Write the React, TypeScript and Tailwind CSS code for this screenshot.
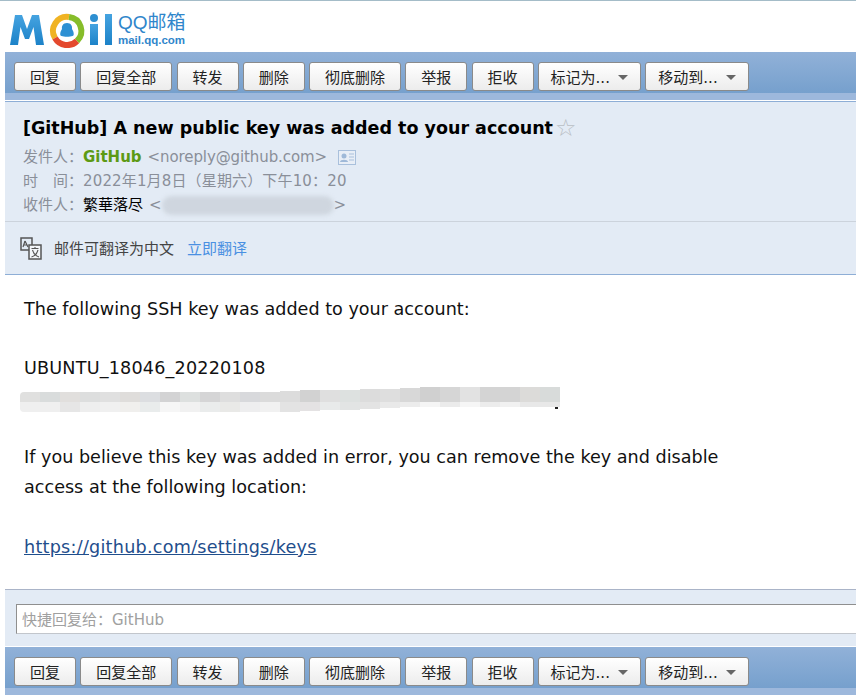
import React from "react";

const FONT = "font-['Tahoma','DejaVu_Sans','Noto_Sans_CJK_SC',sans-serif]";

const actions: Array<{ label: string; width: string; menu?: boolean }> = [
  { label: "回复", width: "w-[62px]" },
  { label: "回复全部", width: "w-[92px]" },
  { label: "转发", width: "w-[62px]" },
  { label: "删除", width: "w-[62px]" },
  { label: "彻底删除", width: "w-[92px]" },
  { label: "举报", width: "w-[62px]" },
  { label: "拒收", width: "w-[62px]" },
  { label: "标记为...", width: "w-[103px]", menu: true },
  { label: "移动到...", width: "w-[104px]", menu: true },
];

// pixelated block over the key: [top box, bottom box]
const redactCells: Array<[string, string]> = [
  ["h-[10px] bg-[#e0e0df] rounded-tl-[4px]", "h-[10px] bg-[#efefef] rounded-bl-[4px]"],
  ["h-[10px] bg-[#d9dcdc]", "h-[10px] bg-[#efefef]"],
  ["h-[10px] bg-[#e1dfdd]", "h-[10px] bg-[#e6e6e6]"],
  ["h-[10px] bg-[#dddede]", "h-[10px] bg-[#eeeeee]"],
  ["h-[10px] bg-[#e0e0e0]", "h-[10px] bg-[#f0f0f0]"],
  ["h-[10px] bg-[#dfdddb]", "h-[10px] bg-[#f0efed]"],
  ["h-[10px] bg-[#dcdee1]", "h-[10px] bg-[#e9ecec]"],
  ["h-[10px] bg-[#d3d3d4]", "h-[10px] bg-[#f6f6f6]"],
  ["h-[10px] bg-[#dde0df]", "h-[10px] bg-[#f1f1f1]"],
  ["h-[10px] bg-[#d5d5d6]", "h-[10px] bg-[#eaecec]"],
  ["h-[10px] bg-[#dedede]", "h-[10px] bg-[#e9e9e7]"],
  ["h-[10px] bg-[#d8d9dc]", "h-[10px] bg-[#eeeeef]"],
  ["h-[10px] bg-[#dbdbdb]", "h-[10px] bg-[#f1f1f1]"],
  ["h-[11px] bg-[#dcdcdc]", "h-[10px] bg-[#e3e3e3]"],
  ["h-[12px] bg-[#d2d2d2]", "h-[9px] bg-[#e4e2e3]"],
  ["h-[12px] bg-[#dfdfdf]", "h-[8px] bg-[#e8eaea]"],
  ["h-[12px] bg-[#dde1e0]", "h-[8px] bg-[#e2e4e4]"],
  ["h-[13px] bg-[#dcdcdc]", "h-[7px] bg-[#e3e3e3]"],
  ["h-[13px] bg-[#dedede]", "h-[6px] bg-[#e9e9e9]"],
  ["h-[14px] bg-[#d8d8d8]", "h-[5px] bg-[#ececec]"],
  ["h-[15px] bg-[#d0d0d0]", "h-[5px] bg-[#f5f5f5]"],
  ["h-[15px] bg-[#d6d6d6]", "h-[5px] bg-[#ebebeb]"],
  ["h-[15px] bg-[#e2e2e2]", "h-[5px] bg-[#f6f6f6]"],
  ["h-[15px] bg-[#d4d4d4]", "h-[5px] bg-[#ececec]"],
  ["h-[15px] bg-[#d4d4d4]", "h-[5px] bg-[#f1f1f1]"],
  ["h-[15px] bg-[#dcdbd9]", "h-[5px] bg-[#e8e8e8]"],
  ["h-[15px] bg-[#d8dbda]", "h-[5px] bg-[#e8e8e8]"],
];

const Toolbar = () => (
  <div className="bg-[#9db8dc]">
    <div className="h-[41px] bg-gradient-to-b from-[#91b1d8] to-[#76a0cd] pl-[9px] pt-[10px]">
      <div className="flex gap-[4.25px]">
        {actions.map((a) => (
          <button
            key={a.label}
            className={`${a.width} h-[29px] shrink-0 rounded-[3px] border border-[#8a8a8a] bg-gradient-to-b from-white to-[#ececec] text-[15px] leading-[28px] pt-[2px] text-[#222] flex items-center justify-center gap-[8px]`}
          >
            <span>{a.label}</span>
            {a.menu && <span className="w-0 h-0 border-x-[5px] border-x-transparent border-t-[5px] border-t-[#666]" />}
          </button>
        ))}
      </div>
    </div>
    <div className="h-[7px]" />
  </div>
);

const Logo = () => (
  <div className="h-[51px] flex items-start pl-[9px] pt-[11px]">
    <svg width="106" height="36" viewBox="0 0 106 36" fill="none">
      <defs>
        <linearGradient id="blue" x1="0" y1="0" x2="0" y2="1">
          <stop offset="0" stopColor="#45a3e0" />
          <stop offset="1" stopColor="#1c82c8" />
        </linearGradient>
      </defs>
      <path d="M1 33 L6 3 H13 L18 17 L23 3 H30 L35 33 H27 L24.500 15 L20 27 H16 L11.500 15 L9 33 Z" fill="url(#blue)" />
      <path d="M46 26 A14 14 0 0 1 60 5" stroke="#f0b323" strokeWidth="6" />
      <path d="M60 5 A14 14 0 0 1 68 29" stroke="#86bd2a" strokeWidth="6" />
      <path d="M68 29 A14 14 0 0 1 46 26" stroke="#e4492e" strokeWidth="6" />
      <path d="M58 11 C62 11 63.500 14 63 17 C65 20 65.500 24 63.500 24 C61 25 55 25 52.500 24 C50.500 24 51 20 53 17 C52.500 14 54 11 58 11 Z" fill="#2d90d3" />
      <circle cx="85" cy="6" r="4" fill="#2d8fd1" />
      <rect x="81" y="12" width="8" height="21" fill="url(#blue)" />
      <rect x="96" y="2" width="7" height="31" fill="url(#blue)" />
    </svg>
    <div className="ml-[3px] flex flex-col text-[#2f86cb] font-['Liberation_Sans','Noto_Sans_CJK_SC',sans-serif]">
      <span className="text-[19px] leading-[22px]">QQ邮箱</span>
      <span className="text-[11.500px] leading-[12px] font-bold">mail.qq.com</span>
    </div>
  </div>
);

const MailHeader = () => (
  <div className="bg-[#e3ebf5] border-t border-[#8eaed6] border-b border-b-[#8eaed6]">
    <div className="h-[120px] pl-[18px] pt-[14px] border-b border-[#ccd3dc]">
      <div className="flex items-center text-[17.500px] leading-[24px] font-bold text-black">
        <span>[GitHub] A new public key was added to your account</span>
        <span className="text-[#b9bec4] text-[24px] leading-[24px] font-normal ml-[2px]">☆</span>
      </div>
      <div className="mt-[5px] flex flex-col text-[15px] leading-[24px] text-[#8a8f99]">
        <div className="flex items-center">
          <span className="w-[60px]">发件人：</span>
          <span className="font-bold text-[#5d9a14]">GitHub</span>
          <span className="ml-[6px] tracking-[-0.1px]">&lt;noreply@github.com&gt;</span>
          <svg className="ml-[11px]" width="18" height="15" viewBox="0 0 18 15">
            <rect x="0.500" y="0.500" width="17" height="14" fill="#e8eef6" stroke="#a9c0dc" />
            <circle cx="6" cy="6" r="2.500" fill="#9fb9d8" />
            <path d="M2 12 C2 9 10 9 10 12 Z" fill="#9fb9d8" />
            <path d="M11 4 H16 M11 7 H16 M11 10 H16" stroke="#a9c0dc" />
          </svg>
        </div>
        <div className="flex">
          <span className="w-[60px] flex gap-[15px]"><span>时</span><span className="whitespace-nowrap">间：</span></span>
          <span className="tracking-[0.15px]">2022年1月8日（星期六）下午10：20</span>
        </div>
        <div className="flex items-center">
          <span className="w-[60px]">收件人：</span>
          <span className="text-black">繁華落尽</span>
          <span className="ml-[6px]">&lt;</span>
          <span className="relative w-[172px] h-[20px]">
            <span className="absolute left-0 right-0 top-[1px] bottom-0 rounded-full bg-[#cfd6df] blur-[2px]" />
          </span>
          <span>&gt;</span>
        </div>
      </div>
    </div>
    <div className="h-[52px] pl-[15px] pt-[2px] flex items-center text-[15px] text-[#444]">
      <svg className="-mt-[2px]" width="22" height="24" viewBox="0 0 22 24" fill="none" stroke="#555" strokeWidth="1.500">
        <path d="M1 2 H12 V14 H1 Z" fill="#e3ebf5" />
        <path d="M5 5 L3 11 M5 5 L8 11 M3.500 9 H7.500" strokeWidth="1.200" />
        <path d="M9 9 H21 V23 H9 Z" fill="#f3f6fa" />
        <path d="M11.500 12.500 H18.500 M15 11 V12.500 M12.500 14 C13.500 17.500 16 20 19 21 M18 14 C17 17.500 15 20 11.500 21" strokeWidth="1.100" />
      </svg>
      <span className="ml-[12px]">邮件可翻译为中文</span>
      <span className="ml-[13px] text-[#4a90e2]">立即翻译</span>
    </div>
  </div>
);

const Redacted = () => (
  <div className="relative flex w-[540px] -ml-[4px]">
    {redactCells.map(([top, bottom], i) => (
      <div key={i} className="w-[20px] shrink-0">
        <div className="h-[15px] flex flex-col justify-end">
          <div className={top} />
        </div>
        <div className={bottom} />
      </div>
    ))}
    <span className="absolute right-[2px] top-[20px] w-[3px] h-[2px] bg-[#222]" />
  </div>
);

const MailBody = () => (
  <div className="h-[314px] pl-[19px] text-[17.600px] leading-[29.700px] text-[#111] pt-[20px]">
    <p>The following SSH key was added to your account:</p>
    <div className="h-[29.700px]" />
    <p className="tracking-[0.18px]">UBUNTU_18046_20220108</p>
    <div className="h-[29.700px] pt-[3px]"><Redacted /></div>
    <div className="h-[29.700px]" />
    <p className="w-[710px]">If you believe this key was added in error, you can remove the key and disable access at the following location:</p>
    <div className="h-[29.700px]" />
    <a className="underline text-[#1f4e8c] tracking-[0.25px]">https://github.com/settings/keys</a>
  </div>
);

const QuickReply = () => (
  <div className="bg-[#e3ebf5] border-t border-[#aab4c8] h-[58px] pl-[11px] pt-[14px] border-b border-b-white">
    <div className="h-[30px] border border-[#8f8f8f] border-b-[#c2c6cc] border-r-0 bg-white pl-[5px] pt-[2px] flex items-center text-[15px] text-[#a0a0a0]">
      快捷回复给：GitHub
    </div>
  </div>
);

export default function App() {
  return (
    <div className={`${FONT} w-[856px] h-[696px] overflow-hidden bg-white flex flex-col`}>
      <div className="h-px bg-[#a4bcc8]" />
      <Logo />
      <div className="pl-[5px]">
        <Toolbar />
        <div className="h-px bg-white" />
        <MailHeader />
      </div>
      <div className="pl-[5px]">
        <MailBody />
        <QuickReply />
        <Toolbar />
      </div>
    </div>
  );
}
